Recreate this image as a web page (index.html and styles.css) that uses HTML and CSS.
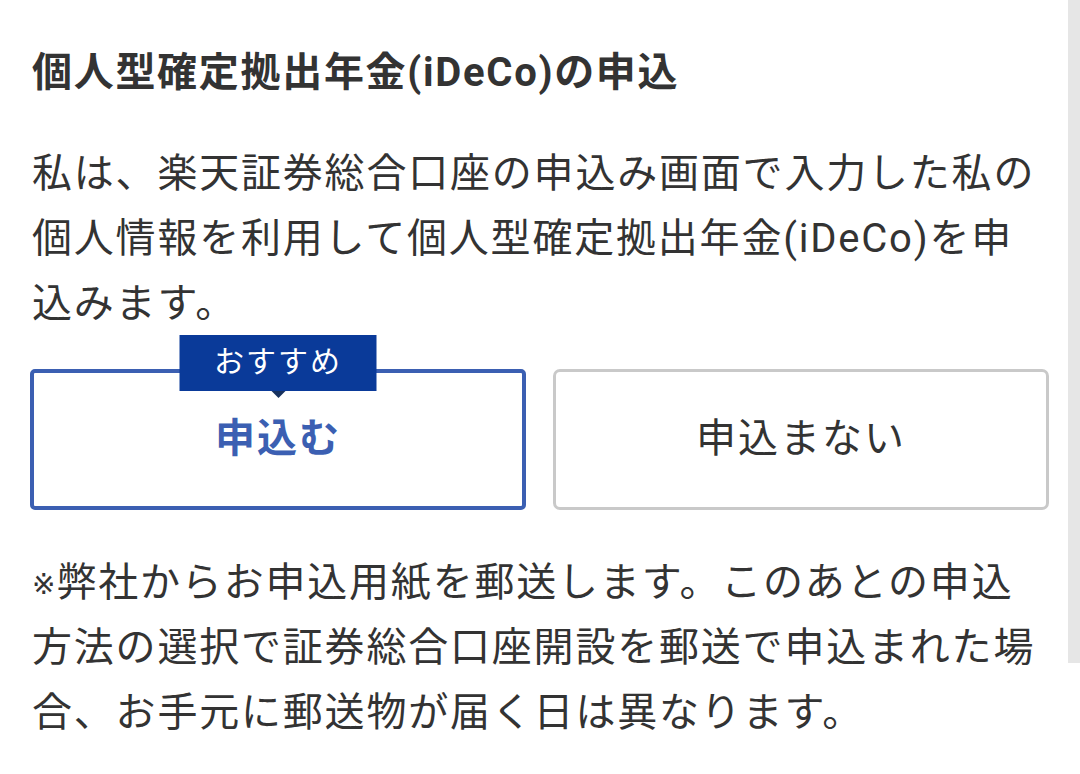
FILE: index.html
```html
<!DOCTYPE html>
<html lang="ja">
<head>
<meta charset="utf-8">
<link rel="stylesheet" href="styles.css">
</head>
<body>
<div class="page">
  <h1 class="title">個人型確定拠出年金(iDeCo)の申込</h1>
  <p class="text">私は、楽天証券総合口座の申込み画面で入力した私の個人情報を利用して個人型確定拠出年金(iDeCo)を申込みます。</p>
  <div class="choices">
    <button class="choice choice-yes" type="button">
      <span class="badge">おすすめ</span>
      申込む
    </button>
    <button class="choice choice-no" type="button">申込まない</button>
  </div>
  <p class="text note"><span class="mark">※</span>弊社からお申込用紙を郵送します。このあとの申込方法の選択で証券総合口座開設を郵送で申込まれた場合、お手元に郵送物が届く日は異なります。</p>
</div>
<div class="scrollbar"></div>
</body>
</html>
```

FILE: styles.css
```css
html, body {
  margin: 0;
  padding: 0;
  background: #ffffff;
}
body {
  font-family: Roboto, "Noto Sans CJK JP", sans-serif;
  color: #333333;
  width: 1080px;
  height: 774px;
  overflow: hidden;
}
.page {
  width: 1068px;
  box-sizing: border-box;
  padding: 45px 19px 0 30px;
}
.title {
  margin: 0 0 0 2px;
  font-size: 40px;
  line-height: 56px;
  font-weight: 700;
  letter-spacing: 1.7px;
  color: #333333;
}
.text {
  margin: 40px 0 0 2px;
  font-size: 40px;
  line-height: 65px;
  letter-spacing: 1.8px;
  font-weight: 400;
}
.mark {
  font-family: "DejaVu Sans", sans-serif;
  font-size: 28px;
  line-height: 1;
  letter-spacing: 0;
  margin-right: 1px;
  vertical-align: 2px;
}
.choices {
  display: grid;
  grid-template-columns: 1fr 1fr;
  gap: 27px;
  margin-top: 33px;
}
.choice {
  position: relative;
  height: 141px;
  box-sizing: border-box;
  background: #ffffff;
  font-family: Roboto, "Noto Sans CJK JP", sans-serif;
  font-size: 40px;
  letter-spacing: 2px;
  padding: 0 0 9px 0;
  display: flex;
  align-items: center;
  justify-content: center;
}
.choice-yes {
  border: 4px solid #3b5fb2;
  border-radius: 5px;
  color: #3b5fb2;
  font-weight: 700;
}
.choice-no {
  border: 3px solid #c9c9c9;
  border-radius: 7px;
  color: #333333;
  font-weight: 400;
}
.badge {
  position: absolute;
  top: -38px;
  left: 50%;
  transform: translateX(-50%);
  width: 197px;
  height: 56px;
  background: #0a3a99;
  color: #ffffff;
  font-size: 30px;
  font-weight: 400;
  letter-spacing: 2px;
  line-height: 54px;
  text-align: center;
}
.badge::after {
  content: "";
  position: absolute;
  left: 50%;
  bottom: -7px;
  margin-left: -7px;
  border-left: 7px solid transparent;
  border-right: 7px solid transparent;
  border-top: 7px solid #17315f;
}
.note {
  margin-top: 40px;
}
.scrollbar {
  position: fixed;
  top: 0;
  right: 0;
  width: 12px;
  height: 663px;
  background: #e6e6e6;
}
```
